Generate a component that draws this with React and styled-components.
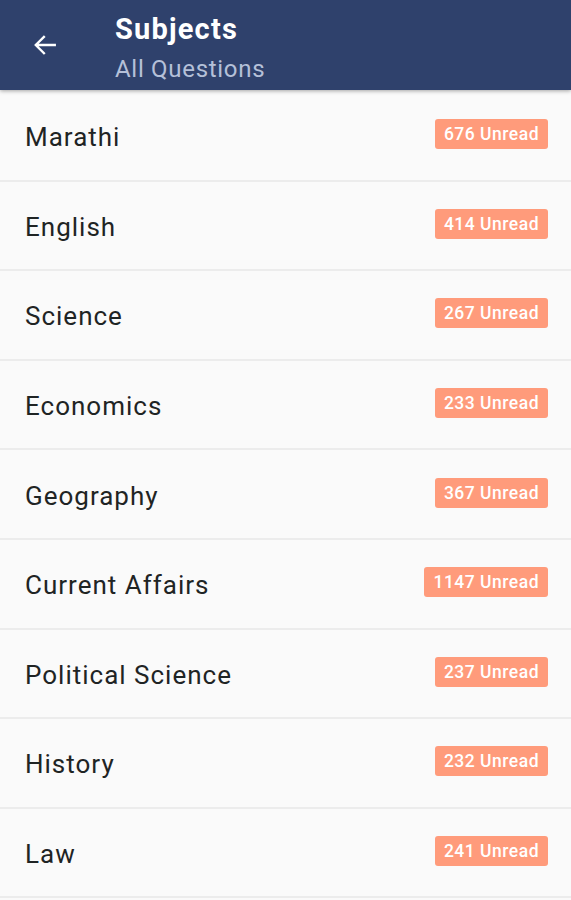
import React from "react";
import styled, { createGlobalStyle } from "styled-components";

const Global = createGlobalStyle`
  html, body { margin: 0; padding: 0; background: #fafafa; }
  body { font-family: Roboto, "Noto Sans", sans-serif; }
`;

const Page = styled.div`
  width: 571px;
  min-height: 900px;
  background: #fafafa;
  overflow: hidden;
`;

const Toolbar = styled.header`
  height: 90px;
  background: #2f416c;
  display: flex;
  align-items: flex-start;
  box-shadow: 0 1px 4px rgba(0, 0, 0, 0.35);
  position: relative;
  z-index: 1;
`;

const BackButton = styled.div`
  width: 90px;
  height: 90px;
  display: flex;
  align-items: center;
  justify-content: center;
  margin-right: 25px;
`;

const Titles = styled.div`
  display: flex;
  flex-direction: column;
  padding-top: 12px;
`;

const Title = styled.div`
  color: #ffffff;
  font-size: 29px;
  font-weight: 700;
  line-height: 34px;
  letter-spacing: 1.2px;
`;

const Subtitle = styled.div`
  color: #b5c0d8;
  font-size: 24px;
  line-height: 28px;
  letter-spacing: 0.7px;
  margin-top: 9px;
`;

const List = styled.div`
  display: flex;
  flex-direction: column;
  padding-top: 2px;
`;

const Row = styled.div`
  height: 87.6px;
  border-bottom: 2px solid #ececec;
  display: flex;
  align-items: center;
  justify-content: space-between;
  padding: 0 23px 0 25px;
`;

const Name = styled.span`
  font-size: 26px;
  color: #1f2424;
  letter-spacing: 1px;
  margin-top: 3px;
`;

const Badge = styled.span`
  background: #ff9b7b;
  color: #fff;
  font-size: 17.5px;
  font-weight: 500;
  letter-spacing: 0.5px;
  height: 30px;
  line-height: 30px;
  padding: 0 9px;
  border-radius: 3px;
  margin-top: -3px;
`;

const subjects = [
  ["Marathi", 676],
  ["English", 414],
  ["Science", 267],
  ["Economics", 233],
  ["Geography", 367],
  ["Current Affairs", 1147],
  ["Political Science", 237],
  ["History", 232],
  ["Law", 241],
];

export default function App() {
  return (
    <Page>
      <Global />
      <Toolbar>
        <BackButton>
          <svg width="26" height="26" viewBox="0 0 24 24" fill="none" stroke="#fff" strokeWidth="2.2" strokeLinecap="square">
            <path d="M21 12H4M11 4.5L3.5 12L11 19.5" />
          </svg>
        </BackButton>
        <Titles>
          <Title>Subjects</Title>
          <Subtitle>All Questions</Subtitle>
        </Titles>
      </Toolbar>
      <List>
        {subjects.map(([name, n]) => (
          <Row key={name}>
            <Name>{name}</Name>
            <Badge>{n} Unread</Badge>
          </Row>
        ))}
      </List>
    </Page>
  );
}
